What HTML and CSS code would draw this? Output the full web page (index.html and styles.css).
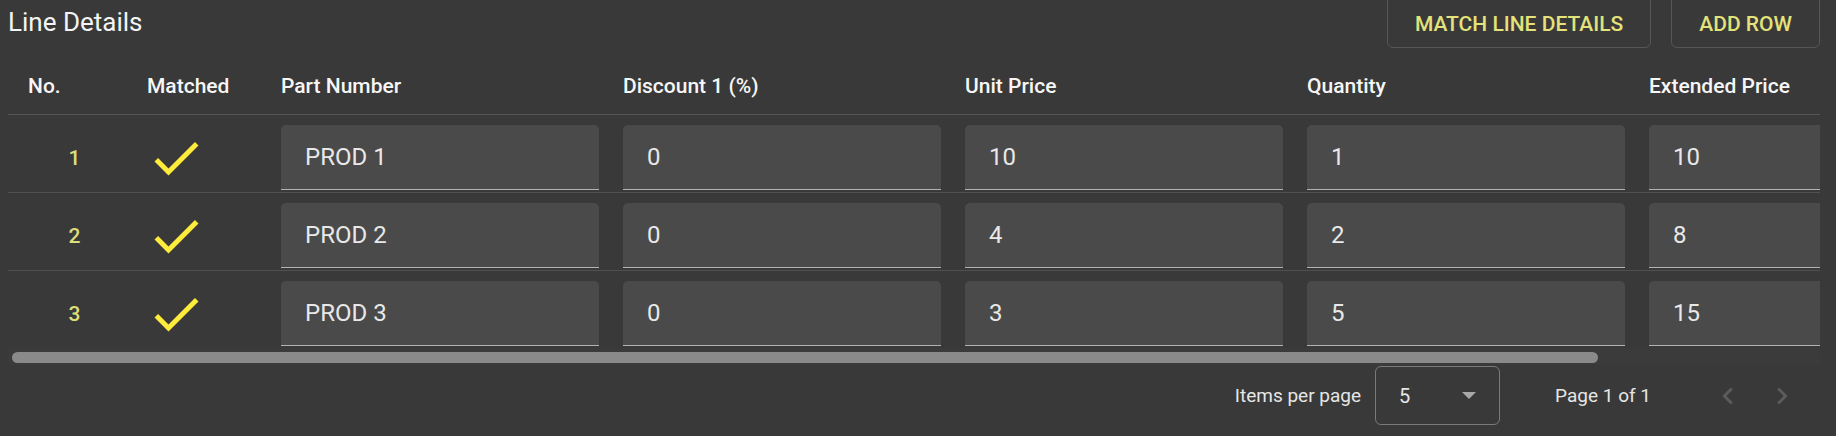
FILE: index.html
```html
<!DOCTYPE html>
<html lang="en">
<head>
<meta charset="utf-8">
<title>Line Details</title>
<link rel="stylesheet" href="styles.css">
</head>
<body>
<div class="page">
  <div class="topbar">
    <h2 class="title">Line Details</h2>
    <div class="actions">
      <button class="btn">MATCH LINE DETAILS</button>
      <button class="btn">ADD ROW</button>
    </div>
  </div>

  <div class="table-wrap">
    <div class="table">
      <div class="row head">
        <div class="cell c-no">No.</div>
        <div class="cell c-match">Matched</div>
        <div class="cell c-data">Part Number</div>
        <div class="cell c-data">Discount 1 (%)</div>
        <div class="cell c-data">Unit Price</div>
        <div class="cell c-data">Quantity</div>
        <div class="cell c-data">Extended Price</div>
        <div class="cell c-end"></div>
      </div>

      <div class="row">
        <div class="cell c-no num">1</div>
        <div class="cell c-match"><svg class="check" viewBox="0 0 24 24"><path d="M9 16.17L4.83 12l-1.42 1.41L9 19 21 7l-1.41-1.41z"/></svg></div>
        <div class="cell c-data"><div class="field">PROD 1</div></div>
        <div class="cell c-data"><div class="field">0</div></div>
        <div class="cell c-data"><div class="field">10</div></div>
        <div class="cell c-data"><div class="field">1</div></div>
        <div class="cell c-data"><div class="field">10</div></div>
        <div class="cell c-end"></div>
      </div>

      <div class="row">
        <div class="cell c-no num">2</div>
        <div class="cell c-match"><svg class="check" viewBox="0 0 24 24"><path d="M9 16.17L4.83 12l-1.42 1.41L9 19 21 7l-1.41-1.41z"/></svg></div>
        <div class="cell c-data"><div class="field">PROD 2</div></div>
        <div class="cell c-data"><div class="field">0</div></div>
        <div class="cell c-data"><div class="field">4</div></div>
        <div class="cell c-data"><div class="field">2</div></div>
        <div class="cell c-data"><div class="field">8</div></div>
        <div class="cell c-end"></div>
      </div>

      <div class="row last">
        <div class="cell c-no num">3</div>
        <div class="cell c-match"><svg class="check" viewBox="0 0 24 24"><path d="M9 16.17L4.83 12l-1.42 1.41L9 19 21 7l-1.41-1.41z"/></svg></div>
        <div class="cell c-data"><div class="field">PROD 3</div></div>
        <div class="cell c-data"><div class="field">0</div></div>
        <div class="cell c-data"><div class="field">3</div></div>
        <div class="cell c-data"><div class="field">5</div></div>
        <div class="cell c-data"><div class="field">15</div></div>
        <div class="cell c-end"></div>
      </div>
    </div>
  </div>

  <div class="scrollbar"><div class="thumb"></div></div>

  <div class="paginator">
    <span class="pg-label">Items per page</span>
    <div class="pg-select">
      <span>5</span>
      <span class="arrow"></span>
    </div>
    <span class="pg-range">Page 1 of 1</span>
    <div class="pg-nav">
      <button class="icon-btn" aria-label="Previous page"><svg viewBox="0 0 24 24"><path d="M15.41 7.41L14 6l-6 6 6 6 1.41-1.41L10.83 12z"/></svg></button>
      <button class="icon-btn" aria-label="Next page"><svg viewBox="0 0 24 24"><path d="M10 6L8.59 7.41 13.17 12l-4.58 4.59L10 18l6-6z"/></svg></button>
    </div>
  </div>
</div>
</body>
</html>
```

FILE: styles.css
```css
* {
  box-sizing: border-box;
}

html, body {
  margin: 0;
  height: 100%;
  background: #393939;
}

body {
  font-family: Roboto, "Liberation Sans", sans-serif;
  color: #f2f2f2;
  overflow: hidden;
}

.page {
  padding: 0 16px 0 8px;
}

.topbar {
  display: flex;
  align-items: center;
  justify-content: space-between;
  height: 54px;
  margin-top: -6px;
}

.title {
  margin: 0;
  font-size: 26px;
  font-weight: 400;
  color: #f4f4f4;
  padding-top: 2px;
}

.actions {
  display: flex;
  gap: 20px;
  height: 100%;
}

.btn {
  height: 100%;
  padding: 0 27px;
  background: transparent;
  border: 1px solid #565656;
  border-radius: 6px;
  color: #e3e27b;
  font-family: Roboto, "Liberation Sans", sans-serif;
  font-size: 21px;
  font-weight: 500;
  padding-top: 6px;
}

.table-wrap {
  overflow: hidden;
  margin-top: 10px;
}

.table {
  display: flex;
  flex-direction: column;
  width: max-content;
}

.row {
  display: flex;
  align-items: center;
  height: 78px;
  padding: 10px 0 2px;
  border-bottom: 1px solid #505050;
}

.row.last {
  border-bottom: none;
  height: 77px;
}

.row.head {
  height: 57px;
  padding: 0;
  font-size: 21px;
  font-weight: 500;
  color: #f6f6f6;
  border-bottom: 1px solid #555;
}

.cell {
  flex: none;
}

.c-no {
  width: 133px;
  padding-left: 20px;
}

.c-no.num {
  padding-left: 0;
  text-align: center;
  font-size: 21px;
  font-weight: 500;
  color: #dedd7a;
}

.c-match {
  width: 140px;
  padding-left: 6px;
  display: flex;
  align-items: center;
}

.check {
  width: 60px;
  height: 60px;
  margin-left: -1px;
  fill: #fdec3c;
}

.c-data {
  width: 342px;
  padding-right: 24px;
}

.c-end {
  width: 71px;
}

.field {
  height: 65px;
  display: flex;
  align-items: center;
  padding-left: 24px;
  background: #4a4a4a;
  border-radius: 5px 5px 0 0;
  border-bottom: 1px solid #b2b2b2;
  font-size: 24px;
  color: #e8e8e8;
}

.scrollbar {
  height: 17px;
  padding: 4px 0 2px 4px;
  background: #3b3b3b;
}

.thumb {
  width: 1586px;
  height: 11px;
  border-radius: 6px;
  background: #8a8a8a;
}

.paginator {
  display: flex;
  align-items: center;
  justify-content: flex-end;
  margin-top: 1px;
  font-size: 19px;
  color: #e6e6e6;
}

.pg-label {
  margin-right: 14px;
}

.pg-select {
  width: 125px;
  height: 59px;
  border: 1px solid #7a7a7a;
  border-radius: 6px;
  display: flex;
  align-items: center;
  justify-content: space-between;
  padding: 0 23px 0 23px;
  font-size: 20px;
}

.arrow {
  width: 0;
  height: 0;
  border-left: 7px solid transparent;
  border-right: 7px solid transparent;
  border-top: 7px solid #a8a8a8;
}

.pg-range {
  margin-left: 55px;
}

.pg-nav {
  display: flex;
  margin-left: 50px;
  margin-right: 11px;
}

.icon-btn {
  width: 54px;
  height: 54px;
  padding: 0;
  border: none;
  background: transparent;
  display: flex;
  align-items: center;
  justify-content: center;
}

.icon-btn svg {
  width: 34px;
  height: 34px;
  fill: #5c5c5c;
}
```
